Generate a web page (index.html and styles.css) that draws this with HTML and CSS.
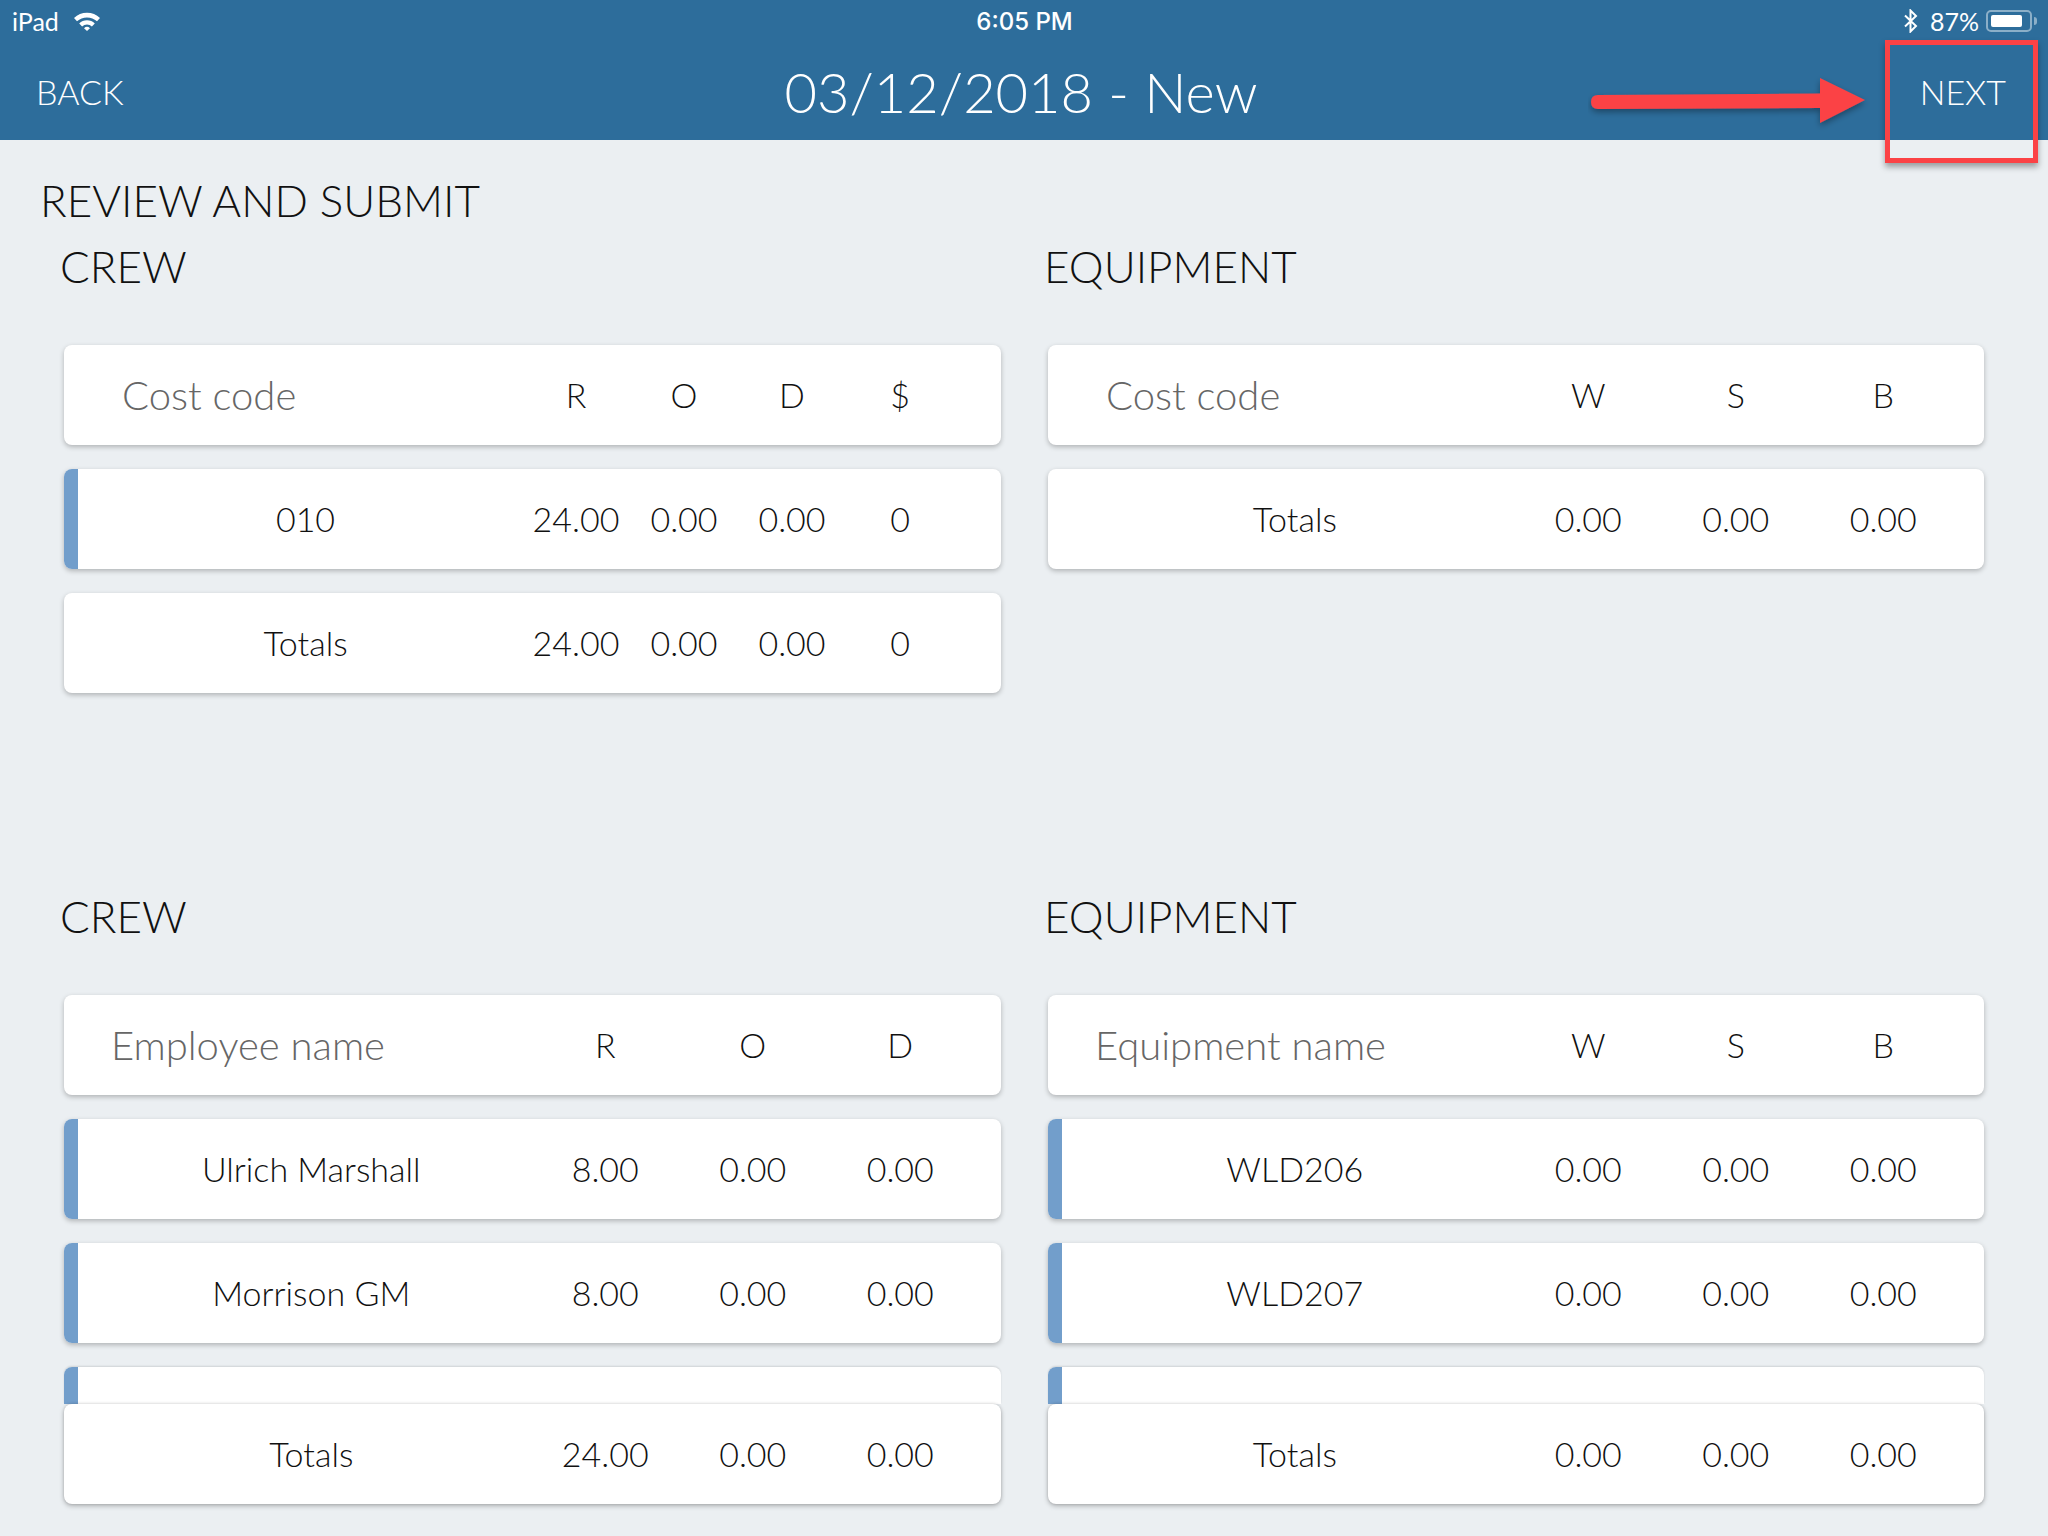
FILE: index.html
```html
<!DOCTYPE html>
<html lang="en">
<head>
    <meta charset="UTF-8">
    <title>Review and submit</title>
    <link rel="stylesheet" href="styles.css">
</head>
<body>
    <header class="topbar">
        <div class="status">
            <div class="status-left">
                <span>iPad</span>
                <svg class="wifi" viewBox="0 0 28 20" width="28" height="20">
                    <path d="M1 7 A19 19 0 0 1 27 7 L24 10.2 A15 15 0 0 0 4 10.2 Z" fill="#fff"/>
                    <path d="M6.2 12.4 A11 11 0 0 1 21.8 12.4 L18.9 15.4 A7 7 0 0 0 9.1 15.4 Z" fill="#fff"/>
                    <path d="M11 17.2 A4.4 4.4 0 0 1 17 17.2 L14 20 Z" fill="#fff"/>
                </svg>
            </div>
            <div class="status-time">6:05 PM</div>
            <div class="status-right">
                <svg class="bluetooth" viewBox="0 0 16 24" width="16" height="24">
                    <path d="M2 6.5 L13 17 L7.5 22.5 V1.5 L13 7 L2 17.5" fill="none" stroke="#fff" stroke-width="2"/>
                </svg>
                <span>87%</span>
                <div class="battery"><div class="battery-level"></div></div>
                <div class="battery-tip"></div>
            </div>
        </div>
        <nav class="navrow">
            <a class="nav-link">BACK</a>
            <h1 class="nav-title">03/12/2018 - New</h1>
            <a class="nav-link nav-next">NEXT</a>
        </nav>
    </header>

    <!-- annotation added over the screenshot -->
    <svg class="arrow" viewBox="0 0 290 70" width="290" height="70">
        <defs>
            <filter id="soft" x="-10%" y="-30%" width="120%" height="170%">
                <feDropShadow dx="0" dy="3" stdDeviation="3" flood-color="#000" flood-opacity="0.35"/>
            </filter>
        </defs>
        <path d="M10 25 L232 23.5 V8 L277 30 L232 53 V38 L10 39 Q3 39 3 32 Q3 25 10 25 Z" fill="#fb4245" filter="url(#soft)"/>
    </svg>
    <div class="highlight"></div>

    <main class="content">
        <h2 class="page-title">REVIEW AND SUBMIT</h2>

        <section class="grid grid-top">
            <div class="column">
                <h3 class="section-title">CREW</h3>
                <div class="card card-head cols-four">
                    <div class="name head-name">Cost code</div>
                    <div class="cell">R</div><div class="cell">O</div><div class="cell">D</div><div class="cell">$</div>
                </div>
                <div class="card marked cols-four">
                    <div class="name">010</div>
                    <div class="cell">24.00</div><div class="cell">0.00</div><div class="cell">0.00</div><div class="cell">0</div>
                </div>
                <div class="card cols-four">
                    <div class="name">Totals</div>
                    <div class="cell">24.00</div><div class="cell">0.00</div><div class="cell">0.00</div><div class="cell">0</div>
                </div>
            </div>
            <div class="column">
                <h3 class="section-title">EQUIPMENT</h3>
                <div class="card card-head">
                    <div class="name head-name">Cost code</div>
                    <div class="cell">W</div><div class="cell">S</div><div class="cell">B</div>
                </div>
                <div class="card">
                    <div class="name">Totals</div>
                    <div class="cell">0.00</div><div class="cell">0.00</div><div class="cell">0.00</div>
                </div>
            </div>
        </section>

        <section class="grid">
            <div class="column">
                <h3 class="section-title">CREW</h3>
                <div class="card card-head">
                    <div class="name head-name wide">Employee name</div>
                    <div class="cell">R</div><div class="cell">O</div><div class="cell">D</div>
                </div>
                <div class="card marked">
                    <div class="name">Ulrich Marshall</div>
                    <div class="cell">8.00</div><div class="cell">0.00</div><div class="cell">0.00</div>
                </div>
                <div class="card marked">
                    <div class="name">Morrison GM</div>
                    <div class="cell">8.00</div><div class="cell">0.00</div><div class="cell">0.00</div>
                </div>
                <div class="card marked cut"></div>
                <div class="card totals">
                    <div class="name">Totals</div>
                    <div class="cell">24.00</div><div class="cell">0.00</div><div class="cell">0.00</div>
                </div>
            </div>
            <div class="column">
                <h3 class="section-title">EQUIPMENT</h3>
                <div class="card card-head">
                    <div class="name head-name wide">Equipment name</div>
                    <div class="cell">W</div><div class="cell">S</div><div class="cell">B</div>
                </div>
                <div class="card marked">
                    <div class="name">WLD206</div>
                    <div class="cell">0.00</div><div class="cell">0.00</div><div class="cell">0.00</div>
                </div>
                <div class="card marked">
                    <div class="name">WLD207</div>
                    <div class="cell">0.00</div><div class="cell">0.00</div><div class="cell">0.00</div>
                </div>
                <div class="card marked cut"></div>
                <div class="card totals">
                    <div class="name">Totals</div>
                    <div class="cell">0.00</div><div class="cell">0.00</div><div class="cell">0.00</div>
                </div>
            </div>
        </section>
    </main>
</body>
</html>
```

FILE: styles.css
```css
body {
    margin: 0;
    height: 1536px;
    overflow: hidden;
    position: relative;
    font-family: "Lato", "Liberation Sans", sans-serif;
    font-weight: 300;
    background-color: #ebeff2;
    color: #111;
}

.topbar {
    height: 140px;
    background-color: #2d6d9b;
    color: #fff;
}

.status {
    height: 42px;
    display: grid;
    grid-template-columns: 1fr auto 1fr;
    align-items: center;
    padding: 0 11px 0 12px;
    font-size: 25px;
    font-weight: 400;
}

.status-left {
    display: flex;
    align-items: center;
    gap: 14px;
}

.status-time {
    font-family: "Inter", sans-serif;
    font-size: 24px;
    font-weight: 500;
}

.status-right {
    display: flex;
    align-items: center;
    justify-content: flex-end;
}

.bluetooth {
    margin-right: 11px;
}

.battery {
    width: 46px;
    height: 22px;
    box-sizing: border-box;
    margin-left: 7px;
    padding: 3px;
    border: 2px solid rgba(255, 255, 255, 0.45);
    border-radius: 5px;
}

.battery-level {
    width: 87%;
    height: 100%;
    background-color: #fff;
    border-radius: 2px;
}

.battery-tip {
    width: 3px;
    height: 8px;
    margin-left: 2px;
    background-color: rgba(255, 255, 255, 0.45);
    border-radius: 0 3px 3px 0;
}

.navrow {
    height: 98px;
    display: grid;
    grid-template-columns: 1fr auto 1fr;
    align-items: center;
    padding: 0 42px 9px 36px;
}

.nav-link {
    font-size: 34px;
}

.nav-next {
    justify-self: end;
}

.nav-title {
    margin: 0;
    font-size: 56px;
    font-weight: 300;
}

.arrow {
    position: absolute;
    left: 1588px;
    top: 70px;
}

.highlight {
    position: absolute;
    left: 1885px;
    top: 40px;
    width: 153px;
    height: 123px;
    box-sizing: border-box;
    border: 5px solid #fb4245;
    box-shadow: 0 4px 6px rgba(0, 0, 0, 0.35);
}

.page-title {
    margin: 0;
    padding: 32px 0 0 40px;
    height: 58px;
    line-height: 56px;
    font-size: 44px;
    font-weight: 300;
}

.grid {
    display: grid;
    grid-template-columns: 937px 936px;
    column-gap: 47px;
    padding-left: 64px;
}

.grid-top {
    height: 650px;
}

.section-title {
    margin: 0 0 45px -4px;
    height: 70px;
    line-height: 72px;
    font-size: 44px;
    font-weight: 300;
    white-space: nowrap;
}

.card {
    position: relative;
    height: 100px;
    margin-bottom: 24px;
    box-sizing: border-box;
    display: flex;
    align-items: center;
    padding: 0 27px 1px;
    background-color: #fff;
    border-radius: 8px;
    box-shadow: 0 2px 5px rgba(0, 0, 0, 0.25);
    font-size: 34px;
    overflow: hidden;
}

.name {
    flex: 1;
    text-align: center;
}

.cell {
    width: 147.5px;
    text-align: center;
}

.head-name {
    text-align: left;
    padding-left: 31px;
    font-size: 40px;
    color: #666;
}

.head-name.wide {
    padding-left: 20px;
}

.cols-four {
    padding: 0 47px 1px 25px;
}

.cols-four .cell {
    width: 108px;
}

.cols-four .head-name {
    padding-left: 33px;
}

.marked::before {
    content: "";
    position: absolute;
    left: 0;
    top: 0;
    bottom: 0;
    width: 14px;
    background-color: #729ecb;
}

.cut {
    height: 37px;
    margin-bottom: 0;
    border-radius: 8px 8px 0 0;
    box-shadow: 0 -1px 2px rgba(0, 0, 0, 0.12);
}

.totals {
    margin-bottom: 0;
    box-shadow: 0 2px 5px rgba(0, 0, 0, 0.25), 0 0 3px rgba(0, 0, 0, 0.15);
}
```
